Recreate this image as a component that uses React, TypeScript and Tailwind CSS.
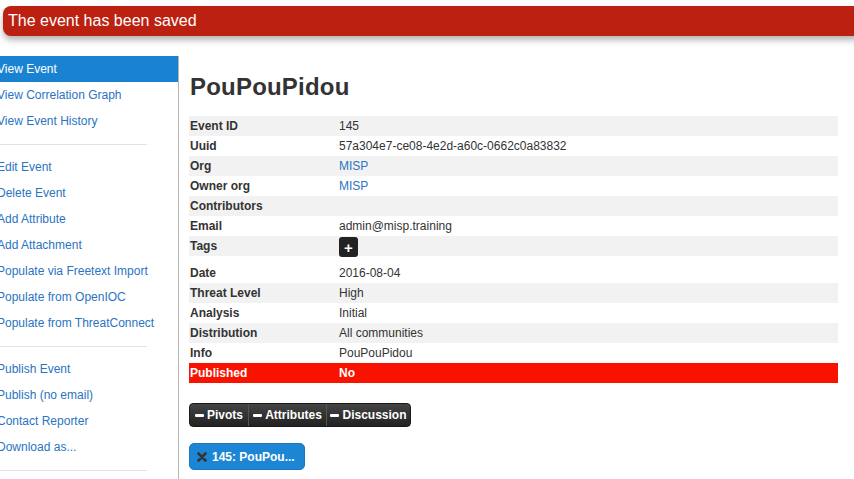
import React from "react";

const navGroups: string[][] = [
  ["View Event", "View Correlation Graph", "View Event History"],
  [
    "Edit Event",
    "Delete Event",
    "Add Attribute",
    "Add Attachment",
    "Populate via Freetext Import",
    "Populate from OpenIOC",
    "Populate from ThreatConnect",
  ],
  ["Publish Event", "Publish (no email)", "Contact Reporter", "Download as..."],
];

type Row = { label: string; value?: string; link?: boolean; gray: boolean; kind?: "tags" | "published" };

const rows: Row[] = [
  { label: "Event ID", value: "145", gray: true },
  { label: "Uuid", value: "57a304e7-ce08-4e2d-a60c-0662c0a83832", gray: false },
  { label: "Org", value: "MISP", link: true, gray: true },
  { label: "Owner org", value: "MISP", link: true, gray: false },
  { label: "Contributors", value: "", gray: true },
  { label: "Email", value: "admin@misp.training", gray: false },
  { label: "Tags", gray: true, kind: "tags" },
  { label: "Date", value: "2016-08-04", gray: false },
  { label: "Threat Level", value: "High", gray: true },
  { label: "Analysis", value: "Initial", gray: false },
  { label: "Distribution", value: "All communities", gray: true },
  { label: "Info", value: "PouPouPidou", gray: false },
  { label: "Published", value: "No", gray: false, kind: "published" },
];

function Minus() {
  return <span className="inline-block w-[9px] h-[3px] bg-white rounded-[1px] mr-[3px]" />;
}

export default function App() {
  return (
    <div
      className="w-[854px] h-[479px] overflow-hidden bg-white text-[#333] text-[12px]"
      style={{ fontFamily: '"Liberation Sans", Arial, sans-serif' }}
    >
      {/* flash */}
      <div className="pt-[6px] pl-[3px] h-[56px]">
        <div className="w-[900px] h-[30px] bg-[#bb2010] rounded-l-[8px] shadow-[0_4px_6px_rgba(0,0,0,0.3)] flex items-center pl-[5px]">
          <span className="text-white text-[16px] leading-none">The event has been saved</span>
        </div>
      </div>

      <div className="flex h-[423px]">
        {/* sidebar */}
        <div className="w-[179px] shrink-0 border-r border-[#b5b5b5] overflow-hidden">
          {navGroups.map((g, gi) => (
            <div key={gi}>
              {g.map((item, i) => {
                const active = gi === 0 && i === 0;
                return (
                  <div
                    key={item}
                    className={
                      "h-[26px] flex items-center " +
                      (active ? "bg-[#1a83d1] text-white" : "text-[#2a74c2]")
                    }
                  >
                    <span className="ml-[-3px] whitespace-nowrap text-[12px]">{item}</span>
                  </div>
                );
              })}
              <div className="h-5 flex items-center">
                <div className="w-[147px] h-px bg-[#e3e3e3]" />
              </div>
            </div>
          ))}
        </div>

        {/* main */}
        <div className="flex-1 pl-[10px]">
          <h2 className="pt-[14px] text-[24px] leading-[34px] font-bold text-[#333] mb-[12px] pl-px tracking-[0.2px]">
            PouPouPidou
          </h2>
          <div className="w-[649px]">
            {rows.map((r) => {
              if (r.kind === "tags") {
                return (
                  <div
                    key={r.label}
                    className="h-[27px] flex bg-[linear-gradient(#f2f2f2_20px,transparent_20px)]"
                  >
                    <div className="w-[150px] pl-px font-bold leading-[20px]">{r.label}</div>
                    <div className="pt-px">
                      <span className="w-[19px] h-[20px] rounded-[3px] bg-[#222] flex items-center justify-center text-white font-bold text-[15px] leading-none">
                        +
                      </span>
                    </div>
                  </div>
                );
              }
              const pub = r.kind === "published";
              return (
                <div
                  key={r.label}
                  className={
                    "h-5 flex items-center " +
                    (pub ? "bg-[#fa1200] text-white font-bold" : r.gray ? "bg-[#f2f2f2]" : "")
                  }
                >
                  <div className="w-[150px] pl-px font-bold">{r.label}</div>
                  <div className={r.link ? "text-[#2a74c2]" : ""}>{r.value}</div>
                </div>
              );
            })}
          </div>

          <div className="mt-[20px] flex">
            <div className="flex h-6 rounded-[4px] overflow-hidden border border-[#1a1a1a] bg-[linear-gradient(#444,#222)] text-white font-bold text-[12px]">
              <div className="w-[58px] flex items-center justify-center">
                <Minus />
                Pivots
              </div>
              <div className="w-[78px] flex items-center justify-center border-l border-[#555]">
                <Minus />
                Attributes
              </div>
              <div className="w-[84px] flex items-center justify-center border-l border-[#555]">
                <Minus />
                Discussion
              </div>
            </div>
          </div>

          <div className="mt-[16px] flex">
            <div className="w-[116px] h-[27px] rounded-[5px] bg-[#1d86d4] border border-[#1a78c0] flex items-center pl-[7px] text-white font-bold text-[12px]">
              <svg width="10" height="10" viewBox="0 0 10 10" className="mr-[5px]">
                <path d="M1.5 1.5 L8.5 8.5 M8.5 1.5 L1.5 8.5" stroke="#333" strokeWidth="2.6" strokeLinecap="round" />
              </svg>
              145: PouPou...
            </div>
          </div>
        </div>
      </div>
    </div>
  );
}
